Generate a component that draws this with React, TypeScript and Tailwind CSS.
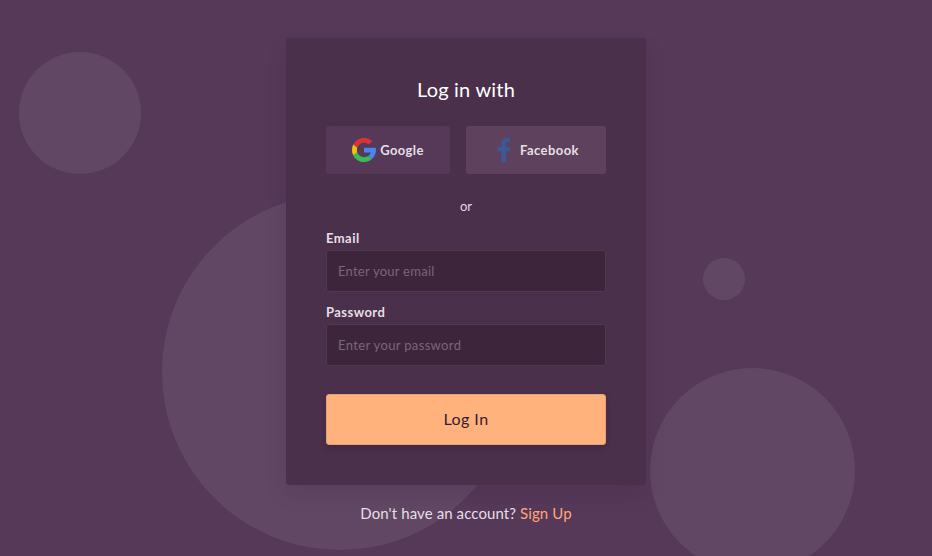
import React from 'react';

function GoogleIcon() {
  return (
    <svg className="size-6 shrink-0" viewBox="0 0 48 48" aria-hidden="true">
      <path fill="#db3236" d="M24 9.5c3.54 0 6.71 1.22 9.21 3.6l6.85-6.85C35.9 2.38 30.47 0 24 0 14.62 0 6.51 5.38 2.56 13.22l7.98 6.19C12.43 13.72 17.74 9.5 24 9.5z" />
      <path fill="#4885ed" d="M48 24.55c0-1.97-.15-3.59-.38-5.05H24v9.52h13.4c-.58 2.66-2.72 5.48-5.24 7.18l7.73 6C44.4 38.02 48 31.84 48 24.55z" />
      <path fill="#f4c20d" d="M10.53 28.59c-.48-1.45-.76-2.99-.76-4.59s.27-3.14.76-4.59l-7.98-6.19C.92 16.46 0 20.12 0 24c0 3.88.92 7.54 2.56 10.78l7.97-6.19z" />
      <path fill="#3cba54" d="M24 48c6.48 0 11.93-2.13 15.89-5.81l-7.73-6c-2.15 1.45-4.92 2.3-8.16 2.3-6.26 0-11.57-4.22-13.47-9.91l-7.98 6.19C6.51 42.62 14.62 48 24 48z" />
    </svg>
  );
}

function FacebookIcon() {
  return (
    <svg className="size-6 shrink-0" viewBox="0 0 264 512" fill="#3b5998" aria-hidden="true">
      <path d="M76.7 512V283H0v-91h76.7v-71.7C76.7 42.4 124.3 0 193.8 0c33.3 0 61.9 2.5 70.2 3.6V85h-48.2c-37.8 0-45.1 18-45.1 44.3V192H256l-11.7 91h-73.6v229" />
    </svg>
  );
}

function Field({ label, type, placeholder, placeholderClass }: { label: string; type: string; placeholder: string; placeholderClass: string }) {
  return (
    <label className="block">
      <span className="block h-5 text-[13px] leading-4 font-bold tracking-[0.45px] text-[#e5dfe5]">{label}</span>
      <input
        type={type}
        placeholder={placeholder}
        className={`block h-[42px] w-full rounded-[3px] border border-[#4f3850] bg-[#3d263c] px-[11px] text-[13px] text-[#e5dfe5] outline-none placeholder:text-[#7a6579] ${placeholderClass}`}
      />
    </label>
  );
}

export default function App() {
  return (
    <div className="relative isolate flex h-[556px] w-full flex-col items-center overflow-hidden bg-[#563959] pt-[38px] font-['Lato',sans-serif]">
      <div className="absolute top-[51.5px] left-[18.5px] -z-10 size-[122px] rounded-full bg-[#614764]" />
      <div className="absolute top-[194px] left-[161.5px] -z-10 size-[356px] rounded-full bg-[#614764]" />
      <div className="absolute top-[258px] left-[703px] -z-10 size-[42px] rounded-full bg-[#614764]" />
      <div className="absolute top-[368px] left-[650px] -z-10 size-[205px] rounded-full bg-[#614764]" />

      <main className="h-[447px] w-[360px] rounded-[3px] bg-[#4a304b] px-10 pt-[39px] shadow-[0_10px_20px_rgba(50,20,50,0.12)]">
        <h1 className="h-[49px] text-center text-[20px] leading-6 tracking-[0.2px] text-white">Log in with</h1>
        <div className="flex gap-4">
          <button className="flex h-12 w-[124px] items-center justify-center gap-1 rounded-[3px] bg-[#563959] text-[13px] font-bold tracking-[0.35px] text-[#e5dfe5]">
            <GoogleIcon />
            <span className="pt-0.5">Google</span>
          </button>
          <button className="flex h-12 w-[140px] items-center justify-center gap-1 rounded-[3px] bg-[#5e425d] pr-px text-[13px] font-bold tracking-[0.45px] text-[#e5dfe5]">
            <FacebookIcon />
            <span className="pt-0.5">Facebook</span>
          </button>
        </div>
        <p className="mt-6 mb-4 text-center text-[13px] leading-4 text-[#e0d9e0]">or</p>
        <form className="flex flex-col gap-3" onSubmit={(event) => event.preventDefault()}>
          <Field label="Email" type="email" placeholder="Enter your email" placeholderClass="tracking-[0.25px]" />
          <Field label="Password" type="password" placeholder="Enter your password" placeholderClass="tracking-[0.35px]" />
          <button className="mt-4 h-[51px] rounded-[3px] border border-[#e5a077] bg-[#ffb27c] pb-0.5 text-base tracking-[0.45px] text-[#351c33] shadow-[0_3px_6px_rgba(30,10,30,0.15)]">
            Log In
          </button>
        </form>
      </main>
      <p className="mt-[18px] text-[15px] leading-5 tracking-[0.1px] text-[#e5dfe5]">
        Don't have an account? <a href="#signup" className="text-[#ffa577]">Sign Up</a>
      </p>
    </div>
  );
}
